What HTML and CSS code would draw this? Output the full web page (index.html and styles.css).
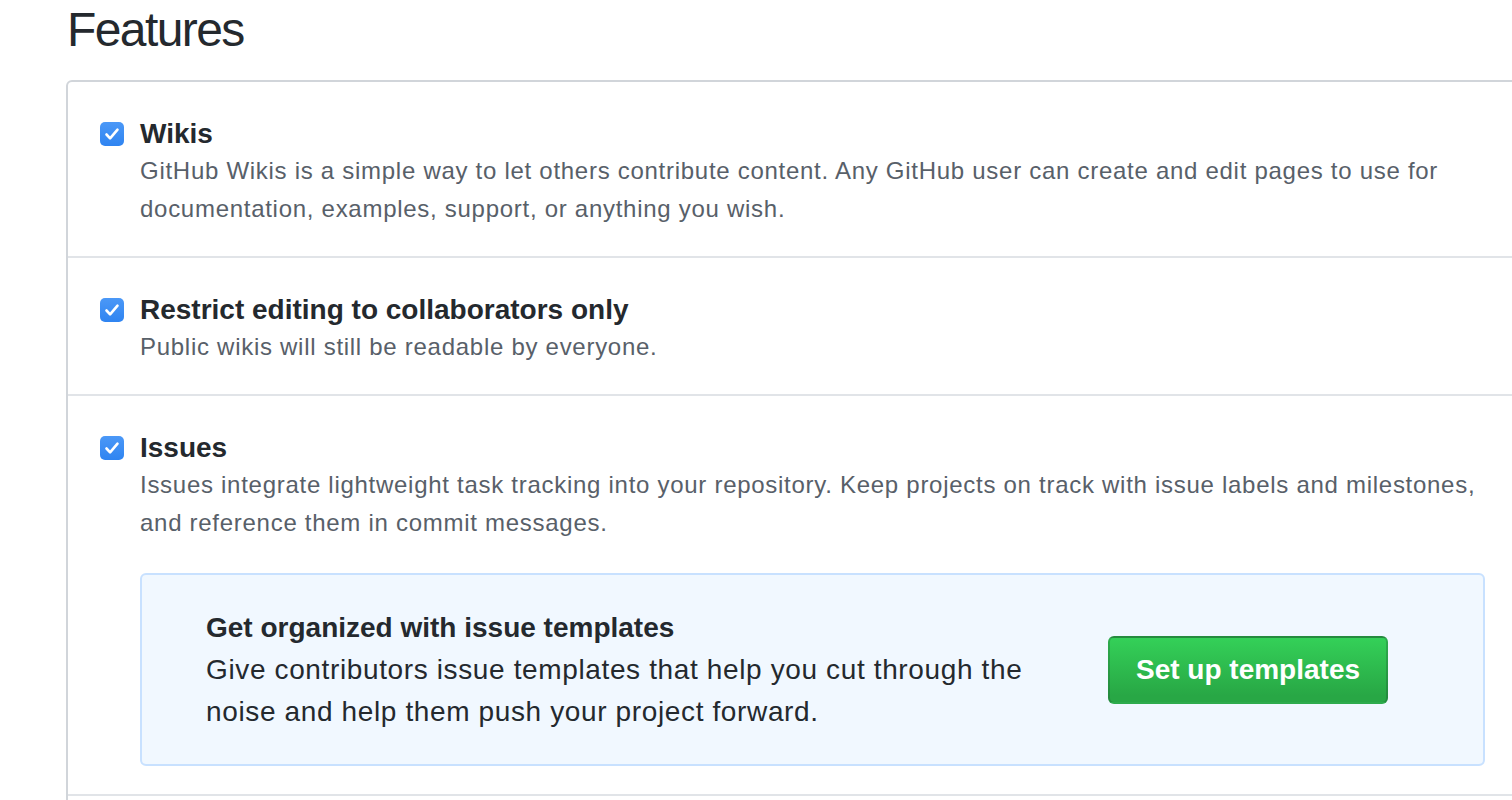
FILE: index.html
```html
<!DOCTYPE html>
<html>
<head>
<meta charset="utf-8">
<link rel="stylesheet" href="styles.css">
</head>
<body>
<div class="page">
  <h2 class="headline">Features</h2>
  <div class="box">
    <div class="row">
      <span class="cb"><svg viewBox="0 0 24 24" width="24" height="24"><path d="M6.5 12.5l3.6 3.8 7.4-8.6" fill="none" stroke="#fff" stroke-width="2.6" stroke-linecap="round" stroke-linejoin="round"/></svg></span>
      <div class="content">
        <div class="title">Wikis</div>
        <p class="desc">GitHub Wikis is a simple way to let others contribute content. Any GitHub user can create and edit pages to use for documentation, examples, support, or anything you wish.</p>
      </div>
    </div>
    <div class="row">
      <span class="cb"><svg viewBox="0 0 24 24" width="24" height="24"><path d="M6.5 12.5l3.6 3.8 7.4-8.6" fill="none" stroke="#fff" stroke-width="2.6" stroke-linecap="round" stroke-linejoin="round"/></svg></span>
      <div class="content">
        <div class="title">Restrict editing to collaborators only</div>
        <p class="desc">Public wikis will still be readable by everyone.</p>
      </div>
    </div>
    <div class="row">
      <span class="cb"><svg viewBox="0 0 24 24" width="24" height="24"><path d="M6.5 12.5l3.6 3.8 7.4-8.6" fill="none" stroke="#fff" stroke-width="2.6" stroke-linecap="round" stroke-linejoin="round"/></svg></span>
      <div class="content">
        <div class="title">Issues</div>
        <p class="desc">Issues integrate lightweight task tracking into your repository. Keep projects on track with issue labels and milestones, and reference them in commit messages.</p>
        <div class="flash">
          <div class="flash-text">
            <div class="flash-title">Get organized with issue templates</div>
            <p class="flash-desc">Give contributors issue templates that help you cut through the noise and help them push your project forward.</p>
          </div>
          <button class="btn">Set up templates</button>
        </div>
      </div>
    </div>
    <div class="row empty"></div>
  </div>
</div>
</body>
</html>
```
FILE: styles.css
```css
html, body {
  margin: 0;
  padding: 0;
  background: #fff;
  overflow: hidden;
}
body {
  font-family: "Liberation Sans", Arial, sans-serif;
  color: #24292e;
}
.page {
  padding-left: 66px;
  width: 1453px;
}
.headline {
  margin: 0 0 20px 1px;
  font-size: 48px;
  line-height: 60px;
  font-weight: 400;
  letter-spacing: -1.6px;
  color: #24292e;
}
.box {
  border: 2px solid #d1d5da;
  border-radius: 6px;
}
.row {
  display: flex;
  align-items: flex-start;
  padding: 34px 32px 28px 32px;
  border-top: 2px solid #e1e4e8;
}
.row:first-child {
  border-top: 0;
}
.row.empty {
  height: 40px;
  padding: 0;
}
.cb {
  flex: none;
  width: 24px;
  height: 24px;
  margin-top: 6px;
  margin-right: 16px;
  border-radius: 5px;
  background: linear-gradient(#4b98f7, #2f84f1);
  display: flex;
}
.content {
  flex: 1;
  min-width: 0;
}
.title {
  font-size: 28px;
  line-height: 36px;
  font-weight: 700;
  color: #24292e;
}
.desc {
  margin: 0;
  font-size: 24px;
  line-height: 38px;
  letter-spacing: 0.72px;
  color: #586069;
}
.flash {
  margin-top: 31px;
  display: flex;
  align-items: center;
  background: #f1f8ff;
  border: 2px solid #c8e1ff;
  border-radius: 6px;
  padding: 32px 95px 31px 64px;
}
.flash-text {
  flex: 1;
  max-width: 840px;
}
.flash-title {
  font-size: 28px;
  line-height: 42px;
  font-weight: 700;
  color: #24292e;
}
.flash-desc {
  margin: 0;
  font-size: 28px;
  line-height: 42px;
  letter-spacing: 0.63px;
  color: #24292e;
}
.btn {
  margin-left: auto;
  width: 280px;
  height: 68px;
  border: 2px solid rgba(27, 31, 35, 0.2);
  border-radius: 6px;
  background: linear-gradient(#34d058, #28a745 90%);
  color: #fff;
  font-family: "Liberation Sans", Arial, sans-serif;
  font-size: 28px;
  font-weight: 700;
  padding: 0;
}
```
